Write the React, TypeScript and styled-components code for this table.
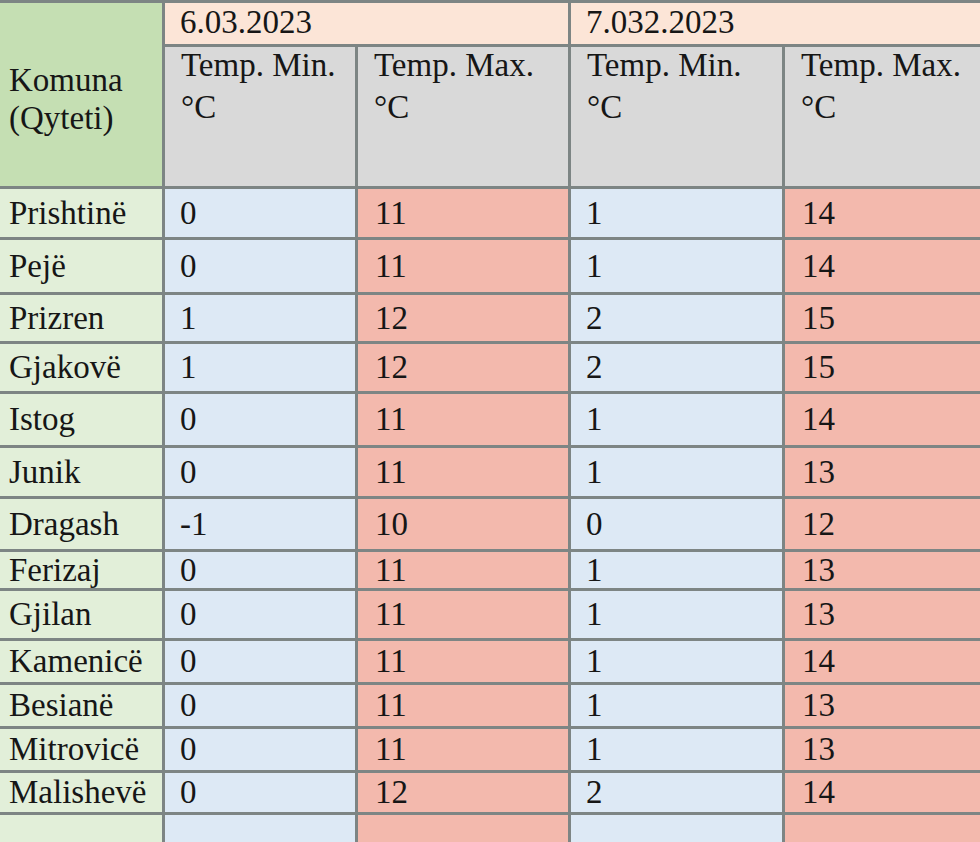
import React from 'react'
import styled, { createGlobalStyle } from 'styled-components'

const GlobalStyle = createGlobalStyle`
  html, body {
    margin: 0;
    padding: 0;
    background: #ffffff;
    overflow: hidden;
  }
`

interface CityRow {
  city: string
  min1: string
  max1: string
  min2: string
  max2: string
  height: number
}

const rows: CityRow[] = [
  { city: 'Prishtinë', min1: '0', max1: '11', min2: '1', max2: '14', height: 48 },
  { city: 'Pejë', min1: '0', max1: '11', min2: '1', max2: '14', height: 52 },
  { city: 'Prizren', min1: '1', max1: '12', min2: '2', max2: '15', height: 46 },
  { city: 'Gjakovë', min1: '1', max1: '12', min2: '2', max2: '15', height: 47 },
  { city: 'Istog', min1: '0', max1: '11', min2: '1', max2: '14', height: 51 },
  { city: 'Junik', min1: '0', max1: '11', min2: '1', max2: '13', height: 48 },
  { city: 'Dragash', min1: '-1', max1: '10', min2: '0', max2: '12', height: 50 },
  { city: 'Ferizaj', min1: '0', max1: '11', min2: '1', max2: '13', height: 36 },
  { city: 'Gjilan', min1: '0', max1: '11', min2: '1', max2: '13', height: 47 },
  { city: 'Kamenicë', min1: '0', max1: '11', min2: '1', max2: '14', height: 41 },
  { city: 'Besianë', min1: '0', max1: '11', min2: '1', max2: '13', height: 41 },
  { city: 'Mitrovicë', min1: '0', max1: '11', min2: '1', max2: '13', height: 41 },
  { city: 'Malishevë', min1: '0', max1: '12', min2: '2', max2: '14', height: 39 },
  { city: '', min1: '', max1: '', min2: '', max2: '', height: 40 },
]

const rowTemplate = ['41px', '139px', ...rows.map(r => `${r.height}px`)].join(' ')

const App: React.FC = () => {
  return (
    <>
      <GlobalStyle />
      <Sheet $rows={rowTemplate}>
        <CornerCell>
          <span>Komuna</span>
          <span>(Qyteti)</span>
        </CornerCell>
        <DateCell>6.03.2023</DateCell>
        <DateCell>7.032.2023</DateCell>

        <HeadCell>
          <HeadLabel>Temp. Min.</HeadLabel>
          <Unit>°C</Unit>
        </HeadCell>
        <HeadCell>
          <HeadLabel>Temp. Max.</HeadLabel>
          <Unit>°C</Unit>
        </HeadCell>
        <HeadCell>
          <HeadLabel>Temp. Min.</HeadLabel>
          <Unit>°C</Unit>
        </HeadCell>
        <HeadCell>
          <HeadLabel>Temp. Max.</HeadLabel>
          <Unit>°C</Unit>
        </HeadCell>

        {rows.map((r, i) => (
          <React.Fragment key={i}>
            <CityCell>{r.city}</CityCell>
            <ValueCell $kind="min">{r.min1}</ValueCell>
            <ValueCell $kind="max">{r.max1}</ValueCell>
            <ValueCell $kind="min">{r.min2}</ValueCell>
            <ValueCell $kind="max">{r.max2}</ValueCell>
          </React.Fragment>
        ))}
      </Sheet>
    </>
  )
}

const Sheet = styled.div<{ $rows: string }>`
  display: grid;
  width: 980px;
  grid-template-columns: 162px 190px 210px 211px 1fr;
  grid-template-rows: ${props => props.$rows};
  gap: 3px;
  padding-top: 3px;
  background: #7d8584;
  font-family: 'Liberation Serif', 'Times New Roman', serif;
  font-size: 33px;
  color: #161616;
`

const Cell = styled.div`
  display: flex;
  align-items: center;
  padding: 0 0 0 17px;
  line-height: 33px;
  white-space: nowrap;
  min-width: 0;
`

const CornerCell = styled(Cell)`
  grid-row: span 2;
  flex-direction: column;
  align-items: flex-start;
  justify-content: center;
  padding-left: 9px;
  padding-top: 8px;
  line-height: 38px;
  background: #c5dfb3;
`

const DateCell = styled(Cell)`
  grid-column: span 2;
  padding-left: 15px;
  padding-bottom: 3px;
  background: #fce5d7;
`

const HeadCell = styled(Cell)`
  flex-direction: column;
  align-items: flex-start;
  justify-content: flex-start;
  padding-left: 16px;
  padding-top: 2px;
  background: #d9d9d9;
`

const HeadLabel = styled.span`
  display: block;
  line-height: 36px;
  margin-top: -2px;
`

const Unit = styled.span`
  display: block;
  margin-top: 6px;
  line-height: 36px;
`

const CityCell = styled(Cell)`
  padding-left: 9px;
  background: #e2efd9;
`

const ValueCell = styled(Cell)<{ $kind: 'min' | 'max' }>`
  padding-left: ${props => (props.$kind === 'min' ? '15px' : '17px')};
  background: ${props => (props.$kind === 'min' ? '#dde9f5' : '#f3b9ad')};
`

export default App
